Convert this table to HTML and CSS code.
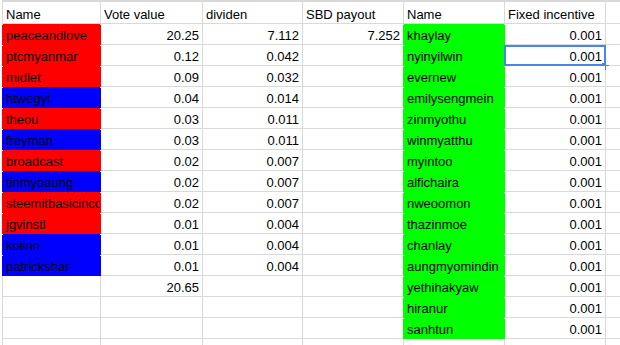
FILE: index.html
```html
<!DOCTYPE html>
<html lang="en">
<head>
<meta charset="UTF-8">
<meta name="viewport" content="width=device-width, initial-scale=1.0">
<title>Vote sheet</title>
<link rel="stylesheet" href="styles.css">
</head>
<body>
<div class="sheet">
    <div class="cell head">Name</div>
    <div class="cell head">Vote value</div>
    <div class="cell head">dividen</div>
    <div class="cell head">SBD payout</div>
    <div class="cell head">Name</div>
    <div class="cell head">Fixed incentive</div>
    <div class="cell head"></div>

    <div class="cell red">peaceandlove</div>
    <div class="cell num">20.25</div>
    <div class="cell num">7.112</div>
    <div class="cell num">7.252</div>
    <div class="cell green">khaylay</div>
    <div class="cell num">0.001</div>
    <div class="cell"></div>

    <div class="cell red">ptcmyanmar</div>
    <div class="cell num">0.12</div>
    <div class="cell num">0.042</div>
    <div class="cell"></div>
    <div class="cell green">nyinyilwin</div>
    <div class="cell num selected">0.001</div>
    <div class="cell"></div>

    <div class="cell red">midlet</div>
    <div class="cell num">0.09</div>
    <div class="cell num">0.032</div>
    <div class="cell"></div>
    <div class="cell green">evernew</div>
    <div class="cell num">0.001</div>
    <div class="cell"></div>

    <div class="cell blue">htwegyi</div>
    <div class="cell num">0.04</div>
    <div class="cell num">0.014</div>
    <div class="cell"></div>
    <div class="cell green">emilysengmein</div>
    <div class="cell num">0.001</div>
    <div class="cell"></div>

    <div class="cell red">theou</div>
    <div class="cell num">0.03</div>
    <div class="cell num">0.011</div>
    <div class="cell"></div>
    <div class="cell green">zinmyothu</div>
    <div class="cell num">0.001</div>
    <div class="cell"></div>

    <div class="cell blue">freyman</div>
    <div class="cell num">0.03</div>
    <div class="cell num">0.011</div>
    <div class="cell"></div>
    <div class="cell green">winmyatthu</div>
    <div class="cell num">0.001</div>
    <div class="cell"></div>

    <div class="cell red">broadcast</div>
    <div class="cell num">0.02</div>
    <div class="cell num">0.007</div>
    <div class="cell"></div>
    <div class="cell green">myintoo</div>
    <div class="cell num">0.001</div>
    <div class="cell"></div>

    <div class="cell blue">tinmyoaung</div>
    <div class="cell num">0.02</div>
    <div class="cell num">0.007</div>
    <div class="cell"></div>
    <div class="cell green">alfichaira</div>
    <div class="cell num">0.001</div>
    <div class="cell"></div>

    <div class="cell red">steemitbasicincome</div>
    <div class="cell num">0.02</div>
    <div class="cell num">0.007</div>
    <div class="cell"></div>
    <div class="cell green">nweoomon</div>
    <div class="cell num">0.001</div>
    <div class="cell"></div>

    <div class="cell red">jgvinstl</div>
    <div class="cell num">0.01</div>
    <div class="cell num">0.004</div>
    <div class="cell"></div>
    <div class="cell green">thazinmoe</div>
    <div class="cell num">0.001</div>
    <div class="cell"></div>

    <div class="cell blue">kolinn</div>
    <div class="cell num">0.01</div>
    <div class="cell num">0.004</div>
    <div class="cell"></div>
    <div class="cell green">chanlay</div>
    <div class="cell num">0.001</div>
    <div class="cell"></div>

    <div class="cell blue">patrickshar</div>
    <div class="cell num">0.01</div>
    <div class="cell num">0.004</div>
    <div class="cell"></div>
    <div class="cell green">aungmyomindin</div>
    <div class="cell num">0.001</div>
    <div class="cell"></div>

    <div class="cell"></div>
    <div class="cell num">20.65</div>
    <div class="cell"></div>
    <div class="cell"></div>
    <div class="cell green">yethihakyaw</div>
    <div class="cell num">0.001</div>
    <div class="cell"></div>

    <div class="cell"></div>
    <div class="cell"></div>
    <div class="cell"></div>
    <div class="cell"></div>
    <div class="cell green">hiranur</div>
    <div class="cell num">0.001</div>
    <div class="cell"></div>

    <div class="cell"></div>
    <div class="cell"></div>
    <div class="cell"></div>
    <div class="cell"></div>
    <div class="cell green">sanhtun</div>
    <div class="cell num">0.001</div>
    <div class="cell"></div>

    <div class="cell"></div>
    <div class="cell"></div>
    <div class="cell"></div>
    <div class="cell"></div>
    <div class="cell"></div>
    <div class="cell"></div>
    <div class="cell"></div>
</div>
</body>
</html>
```

FILE: styles.css
```css
html, body {
    margin: 0;
    height: 100%;
    overflow: hidden;
    background-color: #ffffff;
}
body {
    font-family: "Liberation Sans", Arial, sans-serif;
    font-size: 13px;
    color: #000000;
}
.sheet {
    display: grid;
    grid-template-columns: 97px 101px 99px 100px 100px 100px 1fr;
    grid-template-rows: 21px;
    grid-auto-rows: 20px;
    gap: 1px;
    margin-left: 2px;
    padding: 2px 0 0 1px;
    background-color: #d9d9d9;
}
.cell {
    position: relative;
    background-color: #ffffff;
    padding: 3px 3px 0 3px;
    line-height: 17px;
    white-space: nowrap;
    overflow: hidden;
}
.cell.head {
    padding-top: 4px;
}
.cell.num {
    text-align: right;
    overflow: visible;
}
.red {
    background-color: #ff0000;
    box-shadow: -1px 1px 0 #ff0000, 1px 1px 0 #ff0000;
}
.blue {
    background-color: #0000ff;
    box-shadow: -1px 1px 0 #0000ff, 1px 1px 0 #0000ff;
}
.green {
    background-color: #00ff00;
    box-shadow: -1px 1px 0 #00ff00, 1px 1px 0 #00ff00;
}
.selected::before {
    content: "";
    position: absolute;
    top: 0;
    left: -1px;
    right: -1px;
    bottom: -1px;
    border: 2px solid #4a86e8;
}
.selected::after {
    content: "";
    position: absolute;
    right: -4px;
    bottom: -5px;
    width: 7px;
    height: 7px;
    background-color: #4a86e8;
}
```
